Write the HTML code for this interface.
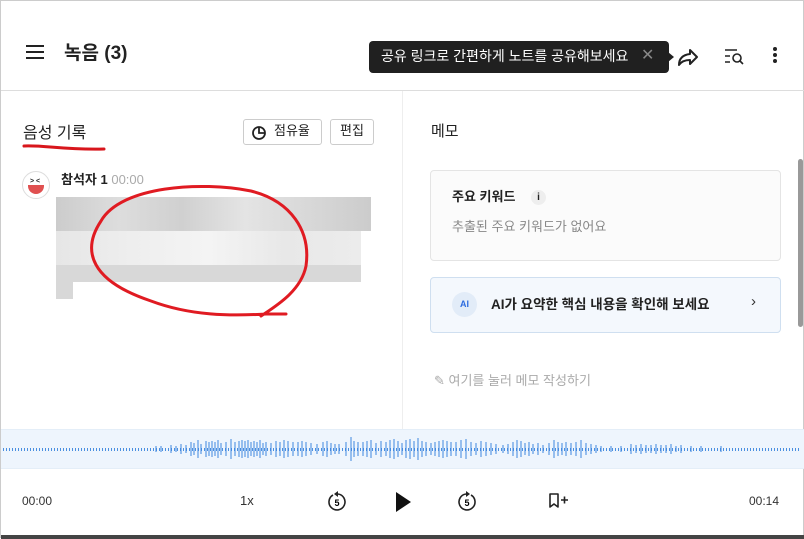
<!DOCTYPE html>
<html><head><meta charset="utf-8"><style>
*{margin:0;padding:0;box-sizing:border-box}
body{width:804px;height:538px;background:#fff;font-family:"Liberation Sans","Noto Sans CJK KR",sans-serif;color:#222;position:relative;overflow:hidden;border:1px solid #ccc}
.abs{position:absolute}
</style></head><body>
<div class="abs" style="left:25px;top:44px;width:18px;height:2px;background:#222;box-shadow:0 6px 0 #222,0 12px 0 #222"></div>
<div class="abs" style="left:63px;top:37px;font-size:19px;font-weight:bold">녹음 (3)</div>
<div class="abs" style="left:368px;top:40px;width:300px;height:32px;background:#202020;border-radius:4px;color:#fff;font-size:14px;line-height:30px;padding-left:12px">공유 링크로 간편하게 노트를 공유해보세요<span style="position:absolute;left:272px;color:#888;font-size:16px">✕</span></div>
<div class="abs" style="left:667px;top:51px;border-left:6px solid #202020;border-top:5px solid transparent;border-bottom:5px solid transparent"></div>
<svg class="abs" style="left:675px;top:45px" width="24" height="22" viewBox="0 0 24 22"><path d="M14 4l7 7-7 7v-4c-6 0-9 2-11 5 0-6 3-10 11-11z" fill="none" stroke="#222" stroke-width="2" stroke-linejoin="round"/></svg>
<svg class="abs" style="left:722px;top:45px" width="24" height="22"><path d="M2 4h12M2 10h5M2 16h5" stroke="#222" stroke-width="1.6"/><circle cx="14" cy="12" r="4" fill="none" stroke="#222" stroke-width="1.6"/><path d="M17 15l3 3" stroke="#222" stroke-width="1.6"/></svg>
<div class="abs" style="left:772px;top:46px;width:4px;height:4px;border-radius:2px;background:#222;box-shadow:0 6px 0 #222,0 12px 0 #222"></div>
<div class="abs" style="left:0;top:89px;width:804px;height:1px;background:#ddd"></div>
<div class="abs" style="left:401px;top:90px;width:1px;height:338px;background:#eee"></div>
<div class="abs" style="left:22px;top:118px;font-size:16px">음성 기록</div>
<svg class="abs" style="left:20px;top:140px" width="90" height="12"><path d="M3 5c20 -1 40 4 80 3" stroke="#d8161c" stroke-width="3" fill="none" stroke-linecap="round"/></svg>
<div class="abs" style="left:242px;top:118px;width:79px;height:26px;border:1px solid #ccc;border-radius:3px;font-size:13px;line-height:22px;padding-left:30px">점유율</div>
<svg class="abs" style="left:250px;top:124px" width="16" height="16"><circle cx="8" cy="8" r="6" fill="none" stroke="#222" stroke-width="1.8"/><path d="M8 2v6h6" fill="none" stroke="#222" stroke-width="1.8"/></svg>
<div class="abs" style="left:329px;top:118px;width:44px;height:26px;border:1px solid #ccc;border-radius:3px;font-size:13px;line-height:22px;text-align:center">편집</div>
<div class="abs" style="left:21px;top:170px;width:28px;height:28px;border-radius:50%;border:1px solid #ddd;background:#fff;overflow:hidden"><div style="position:absolute;left:5px;top:13px;width:16px;height:9px;background:#e05050;border-radius:0 0 8px 8px"></div><div style="position:absolute;left:7px;top:6px;font-size:7px;font-weight:bold">&gt; &lt;</div></div>
<div class="abs" style="left:60px;top:168px;font-size:13px;font-weight:bold">참석자 1 <span style="font-weight:normal;color:#aaa">00:00</span></div>
<div class="abs" style="left:55px;top:196px;width:315px;height:34px;background:linear-gradient(90deg,#ccc,#ddd,#d0d0d0,#e4e4e4,#d8d8d8,#ccc)"></div>
<div class="abs" style="left:55px;top:230px;width:305px;height:34px;background:linear-gradient(90deg,#e6e6e6,#eee,#f4f4f4,#e8e8e8,#ececec)"></div>
<div class="abs" style="left:55px;top:264px;width:305px;height:17px;background:#d8d8d8"></div>
<div class="abs" style="left:55px;top:281px;width:17px;height:17px;background:#d8d8d8"></div>
<svg class="abs" style="left:80px;top:180px" width="240" height="140"><path d="M170 10C120 0 40 5 20 40 0 70 10 100 70 120 110 135 150 135 185 133M185 133h20M170 10c40 10 60 40 55 75-5 25-30 40-45 50" fill="none" stroke="#e01b22" stroke-width="3" stroke-linecap="round"/></svg>
<div class="abs" style="left:430px;top:119px;font-size:15px">메모</div>
<div class="abs" style="left:429px;top:169px;width:351px;height:91px;border:1px solid #e4e4e4;border-radius:4px;background:#fbfbfb"></div>
<div class="abs" style="left:451px;top:185px;font-size:13px;font-weight:bold">주요 키워드</div>
<div class="abs" style="left:530px;top:189px;width:15px;height:15px;border-radius:50%;background:#eee;font-size:10px;text-align:center;line-height:15px;font-weight:bold">i</div>
<div class="abs" style="left:451px;top:215px;font-size:13px;color:#888">추출된 주요 키워드가 없어요</div>
<div class="abs" style="left:429px;top:276px;width:351px;height:56px;border:1px solid #cfdff0;border-radius:4px;background:#f4f8fd"></div>
<div class="abs" style="left:451px;top:291px;width:25px;height:25px;border-radius:50%;background:#e2ecf8;color:#2d6ce0;font-size:9px;font-weight:bold;text-align:center;line-height:25px">AI</div>
<div class="abs" style="left:490px;top:292px;font-size:13.5px;font-weight:bold;color:#222">AI가 요약한 핵심 내용을 확인해 보세요</div>
<div class="abs" style="left:750px;top:292px;font-size:15px;color:#333">›</div>
<div class="abs" style="left:433px;top:369px;font-size:13px;color:#aaa">✎ 여기를 눌러 메모 작성하기</div>
<div class="abs" style="left:797px;top:158px;width:5px;height:168px;background:#999;border-radius:3px"></div>
<div class="abs" style="left:0;top:428px;width:804px;height:40px;background:#eef5fd;border-top:1px solid #e4eef8;border-bottom:1px solid #e4eef8"></div>
<div class="abs" style="left:2px;top:447px;width:798px;height:3px;background:repeating-linear-gradient(90deg,#4a8fe0 0 1px,transparent 1px 3px)"></div>
<svg class="abs" style="left:0;top:428px" width="804" height="40"><path stroke="#3d86e0" stroke-width="1" d="M155 17v6M160 17v6M170 16v8M175 17v6M180 15v10M185 16v8M190 13v14M193 14v12M197 11v18M200 15v10M205 12v16M208 13v14M211 12v16M214 13v14M217 11v18M220 14v12M225 13v14M230 10v20M234 13v14M238 12v16M241 11v18M244 12v16M247 11v18M250 13v14M253 12v16M256 13v14M259 11v18M262 14v12M265 13v14M270 14v12M275 12v16M279 13v14M283 11v18M287 12v16M292 13v14M297 13v14M301 12v16M305 13v14M310 14v12M316 15v10M322 13v14M326 12v16M330 14v12M334 15v10M338 15v10M345 13v14M350 8v24M353 12v16M357 13v14M362 13v14M366 12v16M370 11v18M375 14v12M380 12v16M385 13v14M389 11v18M393 10v20M397 12v16M401 14v12M405 11v18M409 10v20M413 12v16M417 9v22M421 12v16M425 13v14M430 14v12M434 13v14M438 12v16M442 11v18M446 12v16M450 13v14M455 13v14M460 11v18M465 10v20M470 13v14M475 14v12M480 12v16M485 13v14M490 14v12M495 15v10M502 16v8M507 15v10M512 13v14M516 11v18M520 12v16M524 14v12M528 13v14M532 15v10M537 14v12M542 16v8M548 14v12M553 11v18M557 13v14M561 14v12M565 13v14M570 14v12M575 13v14M580 11v18M585 14v12M590 15v10M595 16v8M600 17v6M610 17v6M620 17v6M630 15v10M635 16v8M640 15v10M645 16v8M650 16v8M655 15v10M660 16v8M665 16v8M670 15v10M675 17v6M680 16v8M690 17v6M700 17v6M720 17v6"/></svg>
<div class="abs" style="left:21px;top:493px;font-size:12px;color:#333">00:00</div>
<div class="abs" style="left:239px;top:492px;font-size:13px;color:#333">1x</div>
<svg class="abs" style="left:325px;top:488px" width="22" height="24"><path d="M7 6a8 8 0 1 0 5-1" fill="none" stroke="#222" stroke-width="1.6"/><path d="M12 2l-4 3 4 3z" fill="#222"/><text x="11" y="17" font-size="9" font-weight="bold" text-anchor="middle" font-family="Liberation Sans">5</text></svg>
<svg class="abs" style="left:392px;top:489px" width="20" height="24"><path d="M3 2l15 10-15 10z" fill="#111"/></svg>
<svg class="abs" style="left:455px;top:488px" width="22" height="24"><path d="M15 6a8 8 0 1 1 -5-1" fill="none" stroke="#222" stroke-width="1.6"/><path d="M10 2l4 3-4 3z" fill="#222"/><text x="11" y="17" font-size="9" font-weight="bold" text-anchor="middle" font-family="Liberation Sans">5</text></svg>
<svg class="abs" style="left:546px;top:491px" width="26" height="18"><path d="M3 2h8v13l-4-3-4 3z" fill="none" stroke="#222" stroke-width="1.6" stroke-linejoin="round"/><path d="M14 8h7M17.5 4.5v7" stroke="#222" stroke-width="1.6"/></svg>
<div class="abs" style="left:748px;top:493px;font-size:12px;color:#333">00:14</div>
<div class="abs" style="left:0;top:534px;width:804px;height:4px;background:#444"></div>
</body></html>
